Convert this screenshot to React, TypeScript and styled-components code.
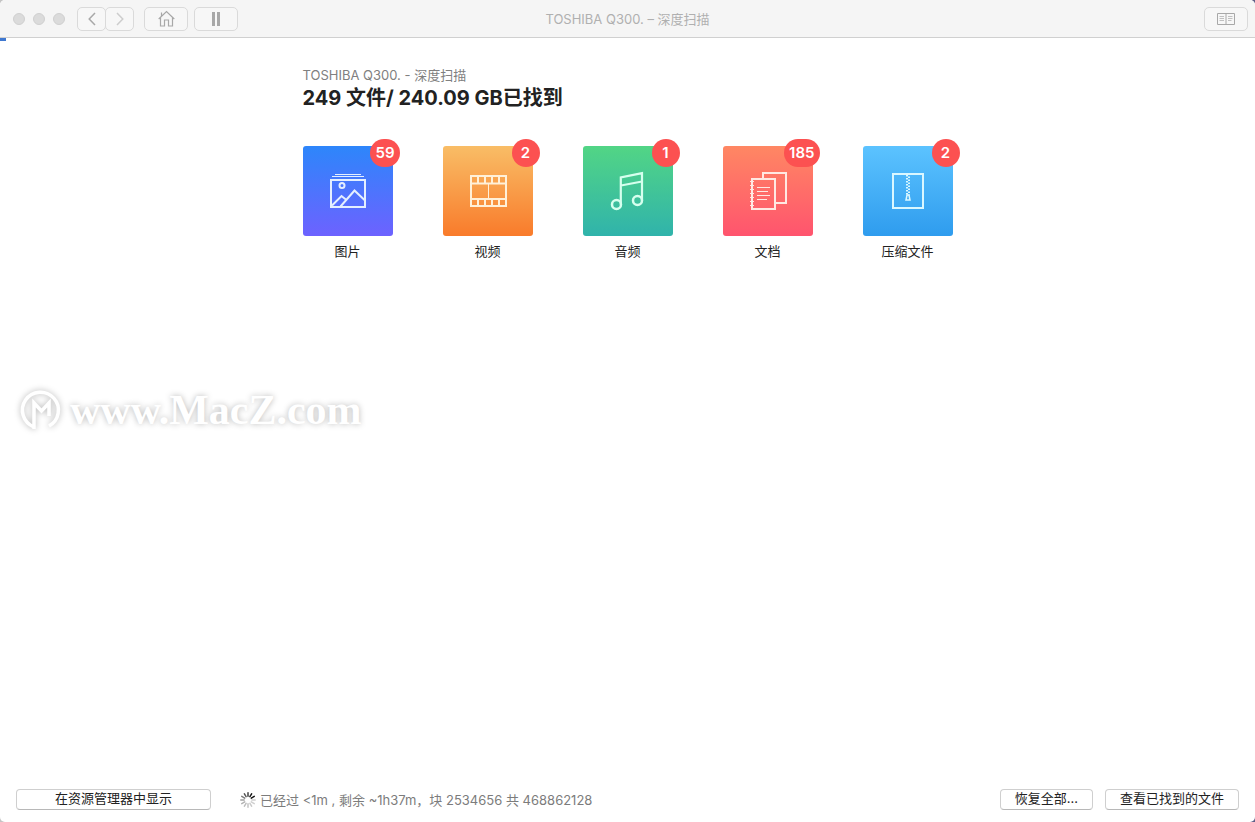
import React from "react";
import styled, { createGlobalStyle, css } from "styled-components";

const GlobalStyle = createGlobalStyle`
  * { box-sizing: border-box; }
  body {
    margin: 0;
    background: linear-gradient(to right, #c4c4c4 50%, #5f6088 50%);
    font-family: Inter, "Noto Sans CJK SC", sans-serif;
    font-size: 13px;
    color: #222;
  }
  button { font: inherit; color: inherit; }
`;

const Window = styled.div`
  position: relative;
  display: flex;
  flex-direction: column;
  min-height: 100vh;
  background: #fff;
  border-radius: 5px;
  overflow: hidden;
`;

const Toolbar = styled.header`
  display: grid;
  grid-template-columns: 1fr auto 1fr;
  align-items: center;
  height: 38px;
  padding: 0 7px;
  background: #f5f5f5;
  border-bottom: 1px solid #d0d0d0;
`;

const ToolGroup = styled.div`
  display: flex;
  align-items: center;
`;

const TrafficLights = styled.div`
  display: flex;
  gap: 8px;
  margin: 0 12px 0 6px;
`;

const Light = styled.button`
  width: 12px;
  height: 12px;
  padding: 0;
  border: 1px solid #d0d0d0;
  border-radius: 50%;
  background: #dbdbdb;
`;

const ToolButton = styled.button<{ $segment?: "left" | "right" }>`
  display: flex;
  align-items: center;
  justify-content: center;
  width: 44px;
  height: 24px;
  padding: 0;
  border: 1px solid #dadada;
  border-radius: 5px;
  background: #f7f7f7;
  color: #a8a8a8;
  ${(p) => p.$segment && css`width: 29px;`}
  ${(p) => p.$segment === "right" && css`
    margin-left: -1px;
    color: #cdcdcd;
  `}
`;

const ToolSpaced = styled.div`
  display: flex;
  gap: 6px;
  margin-left: 10px;
`;

const WindowTitle = styled.h1`
  margin: 0;
  font-size: 13px;
  line-height: 20px;
  font-weight: 400;
  color: #b0b0b0;
`;

const ToolEnd = styled.div`
  display: flex;
  justify-content: flex-end;
`;

const Progress = styled.div`
  height: 3px;
`;

const ProgressFill = styled.div`
  height: 100%;
  background: #3f78d0;
`;

const Main = styled.main`
  flex: 1;
  width: 100%;
  max-width: 650px;
  margin: 0 auto;
  padding-top: 25px;
`;

const Source = styled.p`
  margin: 0;
  line-height: 18px;
  color: #808080;
`;

const Summary = styled.h2`
  margin: 0;
  font-size: 20px;
  line-height: 28px;
  font-weight: 700;
`;

const Categories = styled.div`
  display: flex;
  flex-wrap: wrap;
  gap: 50px;
  margin-top: 34px;
`;

const Category = styled.button`
  display: flex;
  flex-direction: column;
  align-items: center;
  gap: 5px;
  width: 90px;
  padding: 0;
  border: 0;
  background: none;
  line-height: 20px;
`;

const Tile = styled.span<{ $from: string; $to: string }>`
  position: relative;
  display: flex;
  align-items: center;
  justify-content: center;
  width: 90px;
  height: 90px;
  border-radius: 3px;
  background: linear-gradient(${(p) => p.$from}, ${(p) => p.$to});
`;

const Badge = styled.span`
  position: absolute;
  top: -7px;
  right: -7px;
  min-width: 28px;
  padding: 0 5px;
  border-radius: 14px;
  background: #fc5151;
  color: #fff;
  font-size: 15px;
  line-height: 28px;
  font-weight: 600;
  text-align: center;
`;

const Watermark = styled.div`
  position: absolute;
  left: 20px;
  top: 386px;
  display: flex;
  align-items: center;
  gap: 8px;
  font-family: "Liberation Serif", serif;
  font-size: 42px;
  line-height: 48px;
  font-weight: 700;
  color: #fff;
  text-shadow: 0 0 6px rgba(0, 0, 0, 0.28);
  pointer-events: none;

  svg { filter: drop-shadow(0 0 3px rgba(0, 0, 0, 0.3)); overflow: visible; }
`;

const Footer = styled.footer`
  display: flex;
  align-items: center;
  padding: 0 16px 12px;
`;

const PushButton = styled.button<{ $wide?: boolean }>`
  height: 21px;
  padding: 0 14px 2px;
  border: 1px solid #cfcfcf;
  border-bottom-color: #b8b8b8;
  border-radius: 4px;
  background: #fff;
  line-height: 17px;
  ${(p) => p.$wide && css`width: 195px;`}
`;

const Status = styled.p`
  display: flex;
  align-items: center;
  flex: 1;
  gap: 4px;
  margin: 0 0 0 29px;
  line-height: 20px;
  color: #7c7c7c;
`;

const Actions = styled.div`
  display: flex;
  gap: 12px;
`;

const ImagesIcon = () => (
  <svg width="38" height="38" viewBox="0 0 38 38" fill="none" stroke="#e4efff" strokeWidth="2">
    <path d="M6 2.5h26M3 4.5h32" strokeWidth="1" />
    <path d="M2 8h34v27H2z" />
    <circle cx="13" cy="13.500" r="2.500" />
    <path d="M3 33.5l9.500-9.500 5 4M11.500 34.500L25.500 18.500 35.500 28" />
  </svg>
);

const VideoIcon = () => (
  <svg width="38" height="38" viewBox="0 0 38 38" fill="none" stroke="#fff0d8" strokeWidth="2">
    <path d="M2 4h35v30H2zM2 11.500h35M2 27h35" />
    <path d="M9 4v7.500M16 4v7.500M23 4v7.500M30 4v7.500M9 27v7M16 27v7M23 27v7M30 27v7" />
    <path d="M19.500 12v15" strokeWidth="1" />
  </svg>
);

const AudioIcon = () => (
  <svg width="38" height="42" viewBox="0 0 38 42" fill="none" stroke="#d6ffee" strokeWidth="2.500">
    <circle cx="7.500" cy="34.500" r="4.500" />
    <circle cx="28.500" cy="30.500" r="4.500" />
    <path d="M11.800 34.500V7.500L33 3.200v27.300M12 15.500L33 11.500" strokeWidth="2.200" />
  </svg>
);

const DocumentsIcon = () => (
  <svg width="38" height="42" viewBox="0 0 38 42" fill="none" stroke="#ffe8e2" strokeWidth="2">
    <path d="M14 8V3h23v30H27" />
    <path d="M3 9h23v30H3z" />
    <path d="M1 11.500h4M1 15.500h4M1 19.500h4M1 23.500h4M1 27.500h4M1 31.500h4M1 35.500h4" strokeWidth="1" />
    <path d="M8 17.500h13M8 21.500h11M8 25.500h13M8 29.500h10" strokeWidth="1" />
  </svg>
);

const ArchivesIcon = () => (
  <svg width="34" height="38" viewBox="0 0 34 38" fill="none" stroke="#daf7ff" strokeWidth="2">
    <path d="M2 2h30v34H2z" />
    <path d="M16 3v20" strokeDasharray="1.500 1.500" />
    <path d="M18 4.500v19" strokeDasharray="1.500 1.500" />
    <path d="M16 23h2l1 5h-4z" strokeWidth="1.500" />
  </svg>
);

const HomeIcon = () => (
  <svg width="17" height="17" viewBox="0 0 17 17" fill="none" stroke="currentColor" strokeWidth="1.200">
    <path d="M.7 9L8.500 1.500 16.300 9M2.500 7.500v8.500h4v-6h4v6h4V7.500M3.500 6V2.500" />
  </svg>
);

const BookIcon = () => (
  <svg width="18" height="12" viewBox="0 0 18 12" fill="none" stroke="currentColor">
    <path d="M.5.5h17v11H.5zM9 .5v11" />
    <path d="M2.500 3.500h4.500M2.500 5.500h4.500M2.500 7.500h4.500M11 3.500h4.500M11 5.500h4.500M11 7.500h3.500" strokeOpacity=".7" />
  </svg>
);

const Spinner = () => (
  <svg width="16" height="16" viewBox="0 0 16 16" stroke="#111" strokeWidth="1.500" strokeLinecap="round" aria-hidden="true">
    {[0.8, 0.95, 1, 0.2, 0.2, 0.22, 0.25, 0.28, 0.32, 0.4, 0.55, 0.7].map((opacity, i) => (
      <path key={i} d="M8 .8v3.400" strokeOpacity={opacity} transform={`rotate(${i * 30} 8 8)`} />
    ))}
  </svg>
);

const categories = [
  { label: "图片", count: 59, from: "#2d86fb", to: "#6d62ff", Icon: ImagesIcon },
  { label: "视频", count: 2, from: "#f9bd66", to: "#f97b2b", Icon: VideoIcon },
  { label: "音频", count: 1, from: "#52d585", to: "#30b3ab", Icon: AudioIcon },
  { label: "文档", count: 185, from: "#ff8763", to: "#ff546e", Icon: DocumentsIcon },
  { label: "压缩文件", count: 2, from: "#5cc3ff", to: "#2f9cee", Icon: ArchivesIcon },
];

export default function App() {
  const percent = 0.5;
  return (
    <>
      <GlobalStyle />
      <Window>
        <Toolbar>
          <ToolGroup>
            <TrafficLights>
              <Light aria-label="关闭" />
              <Light aria-label="最小化" />
              <Light aria-label="缩放" />
            </TrafficLights>
            <ToolButton $segment="left" aria-label="后退">
              <svg width="8" height="14" viewBox="0 0 8 14" fill="none" stroke="currentColor" strokeWidth="1.500">
                <path d="M7 1L1.200 7 7 13" />
              </svg>
            </ToolButton>
            <ToolButton $segment="right" aria-label="前进">
              <svg width="8" height="14" viewBox="0 0 8 14" fill="none" stroke="currentColor" strokeWidth="1.500">
                <path d="M1 1l5.800 6L1 13" />
              </svg>
            </ToolButton>
            <ToolSpaced>
              <ToolButton aria-label="主页"><HomeIcon /></ToolButton>
              <ToolButton aria-label="暂停">
                <svg width="8" height="14" viewBox="0 0 8 14" fill="currentColor">
                  <path d="M0 0h3v14H0zM5 0h3v14H5z" />
                </svg>
              </ToolButton>
            </ToolSpaced>
          </ToolGroup>
          <WindowTitle>TOSHIBA Q300. – 深度扫描</WindowTitle>
          <ToolEnd>
            <ToolButton aria-label="手册"><BookIcon /></ToolButton>
          </ToolEnd>
        </Toolbar>
        <Progress role="progressbar" aria-label="扫描进度" aria-valuenow={percent}>
          <ProgressFill style={{ width: `${percent}%` }} />
        </Progress>
        <Main>
          <Source>TOSHIBA Q300. - 深度扫描</Source>
          <Summary>249 文件/ 240.09 GB已找到</Summary>
          <Categories>
            {categories.map(({ label, count, from, to, Icon }) => (
              <Category key={label}>
                <Tile $from={from} $to={to}>
                  <Icon />
                  <Badge>{count}</Badge>
                </Tile>
                {label}
              </Category>
            ))}
          </Categories>
        </Main>
        <Watermark>
          <svg width="42" height="42" viewBox="0 0 42 42" fill="none" stroke="#fff" strokeWidth="3.500">
            <path d="M14 40V14l7.500 8 7.500-8v13M14 38A18 18 0 1 1 29 37" />
          </svg>
          <span>www.MacZ.com</span>
        </Watermark>
        <Footer>
          <PushButton $wide>在资源管理器中显示</PushButton>
          <Status>
            <Spinner />
            <span>已经过 &lt;1m , 剩余 ~1h37m，块 2534656 共 468862128</span>
          </Status>
          <Actions>
            <PushButton>恢复全部...</PushButton>
            <PushButton>查看已找到的文件</PushButton>
          </Actions>
        </Footer>
      </Window>
    </>
  );
}
